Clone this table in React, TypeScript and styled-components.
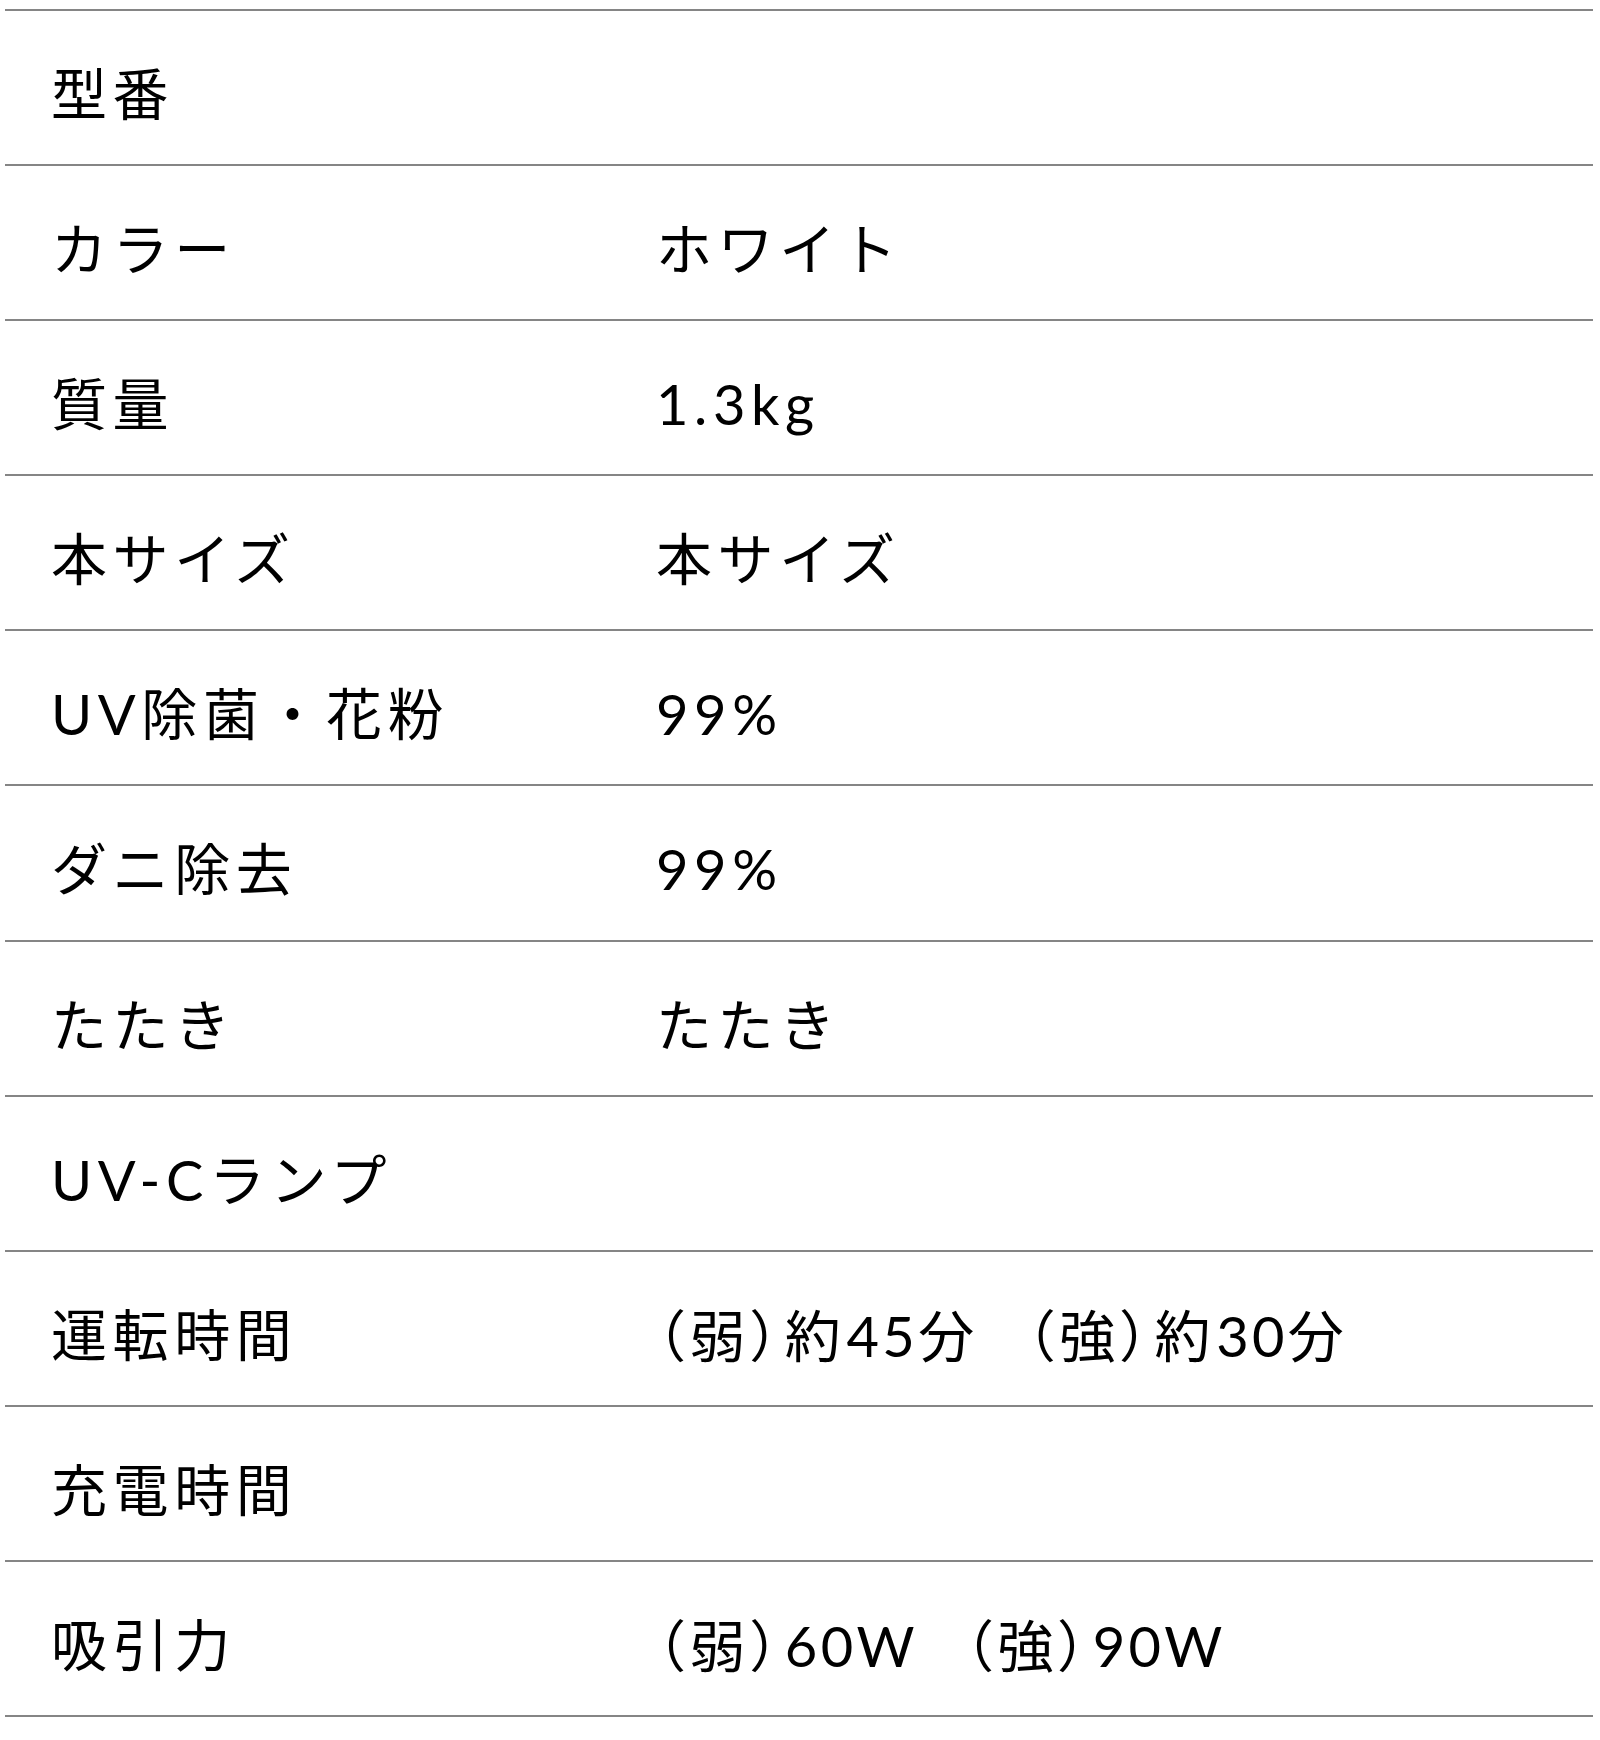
import React from "react";
import styled, { createGlobalStyle } from "styled-components";

const GlobalStyle = createGlobalStyle`
  html, body {
    margin: 0;
    padding: 0;
    background: #ffffff;
  }
  body {
    font-family: "Lato", "Noto Sans CJK JP", sans-serif;
    color: #000000;
  }
`;

const Page = styled.div`
  padding: 9px 7px 0 5px;
`;

const SpecTable = styled.dl`
  margin: 0;
  border-top: 2px solid #858585;
`;

const Row = styled.div`
  display: grid;
  grid-template-columns: 605px 1fr;
  align-items: center;
  height: 153.1px;
  box-sizing: content-box;
  border-bottom: 2px solid #858585;
  padding-left: 46px;
`;

const Label = styled.dt`
  margin: 0;
  padding-top: 12px;
  font-family: "Lato", "Noto Sans CJK JP", sans-serif;
  font-size: 56px;
  letter-spacing: 0.1em;
  line-height: 1.2;
  white-space: nowrap;
`;

const Value = styled.dd`
  margin: 0;
  padding-top: 12px;
  font-family: "Lato", "Noto Sans CJK JP", sans-serif;
  font-size: 56px;
  letter-spacing: 0.1em;
  line-height: 1.2;
  white-space: pre;
`;

const Paren = styled.span`
  font-family: "Noto Sans CJK JP", sans-serif;
  font-feature-settings: "palt";
`;

const Latin = styled.span`
  letter-spacing: 0.06em;
`;

const Gap = styled.span`
  display: inline-block;
  width: 46px;
`;

type Part = string | { paren: string } | { latin: string } | { gap: true };

const specs: { label: string; value: Part[] }[] = [
  { label: "型番", value: [] },
  { label: "カラー", value: ["ホワイト"] },
  { label: "質量", value: ["1.3kg"] },
  { label: "本サイズ", value: ["本サイズ"] },
  { label: "UV除菌・花粉", value: ["99%"] },
  { label: "ダニ除去", value: ["99%"] },
  { label: "たたき", value: ["たたき"] },
  { label: "UV-Cランプ", value: [] },
  {
    label: "運転時間",
    value: [
      { paren: "（" }, "弱", { paren: "）" }, "約", { latin: "45" }, "分",
      { gap: true },
      { paren: "（" }, "強", { paren: "）" }, "約", { latin: "30" }, "分",
    ],
  },
  { label: "充電時間", value: [] },
  {
    label: "吸引力",
    value: [
      { paren: "（" }, "弱", { paren: "）" }, { latin: "60W" },
      { gap: true },
      { paren: "（" }, "強", { paren: "）" }, { latin: "90W" },
    ],
  },
];

export default function App() {
  return (
    <>
      <GlobalStyle />
      <Page>
        <SpecTable>
          {specs.map((s) => (
            <Row key={s.label}>
              <Label>{s.label}</Label>
              <Value>
                {s.value.map((p, i) => {
                  if (typeof p === "string") return <React.Fragment key={i}>{p}</React.Fragment>;
                  if ("paren" in p) return <Paren key={i}>{p.paren}</Paren>;
                  if ("latin" in p) return <Latin key={i}>{p.latin}</Latin>;
                  return <Gap key={i} />;
                })}
              </Value>
            </Row>
          ))}
        </SpecTable>
      </Page>
    </>
  );
}
